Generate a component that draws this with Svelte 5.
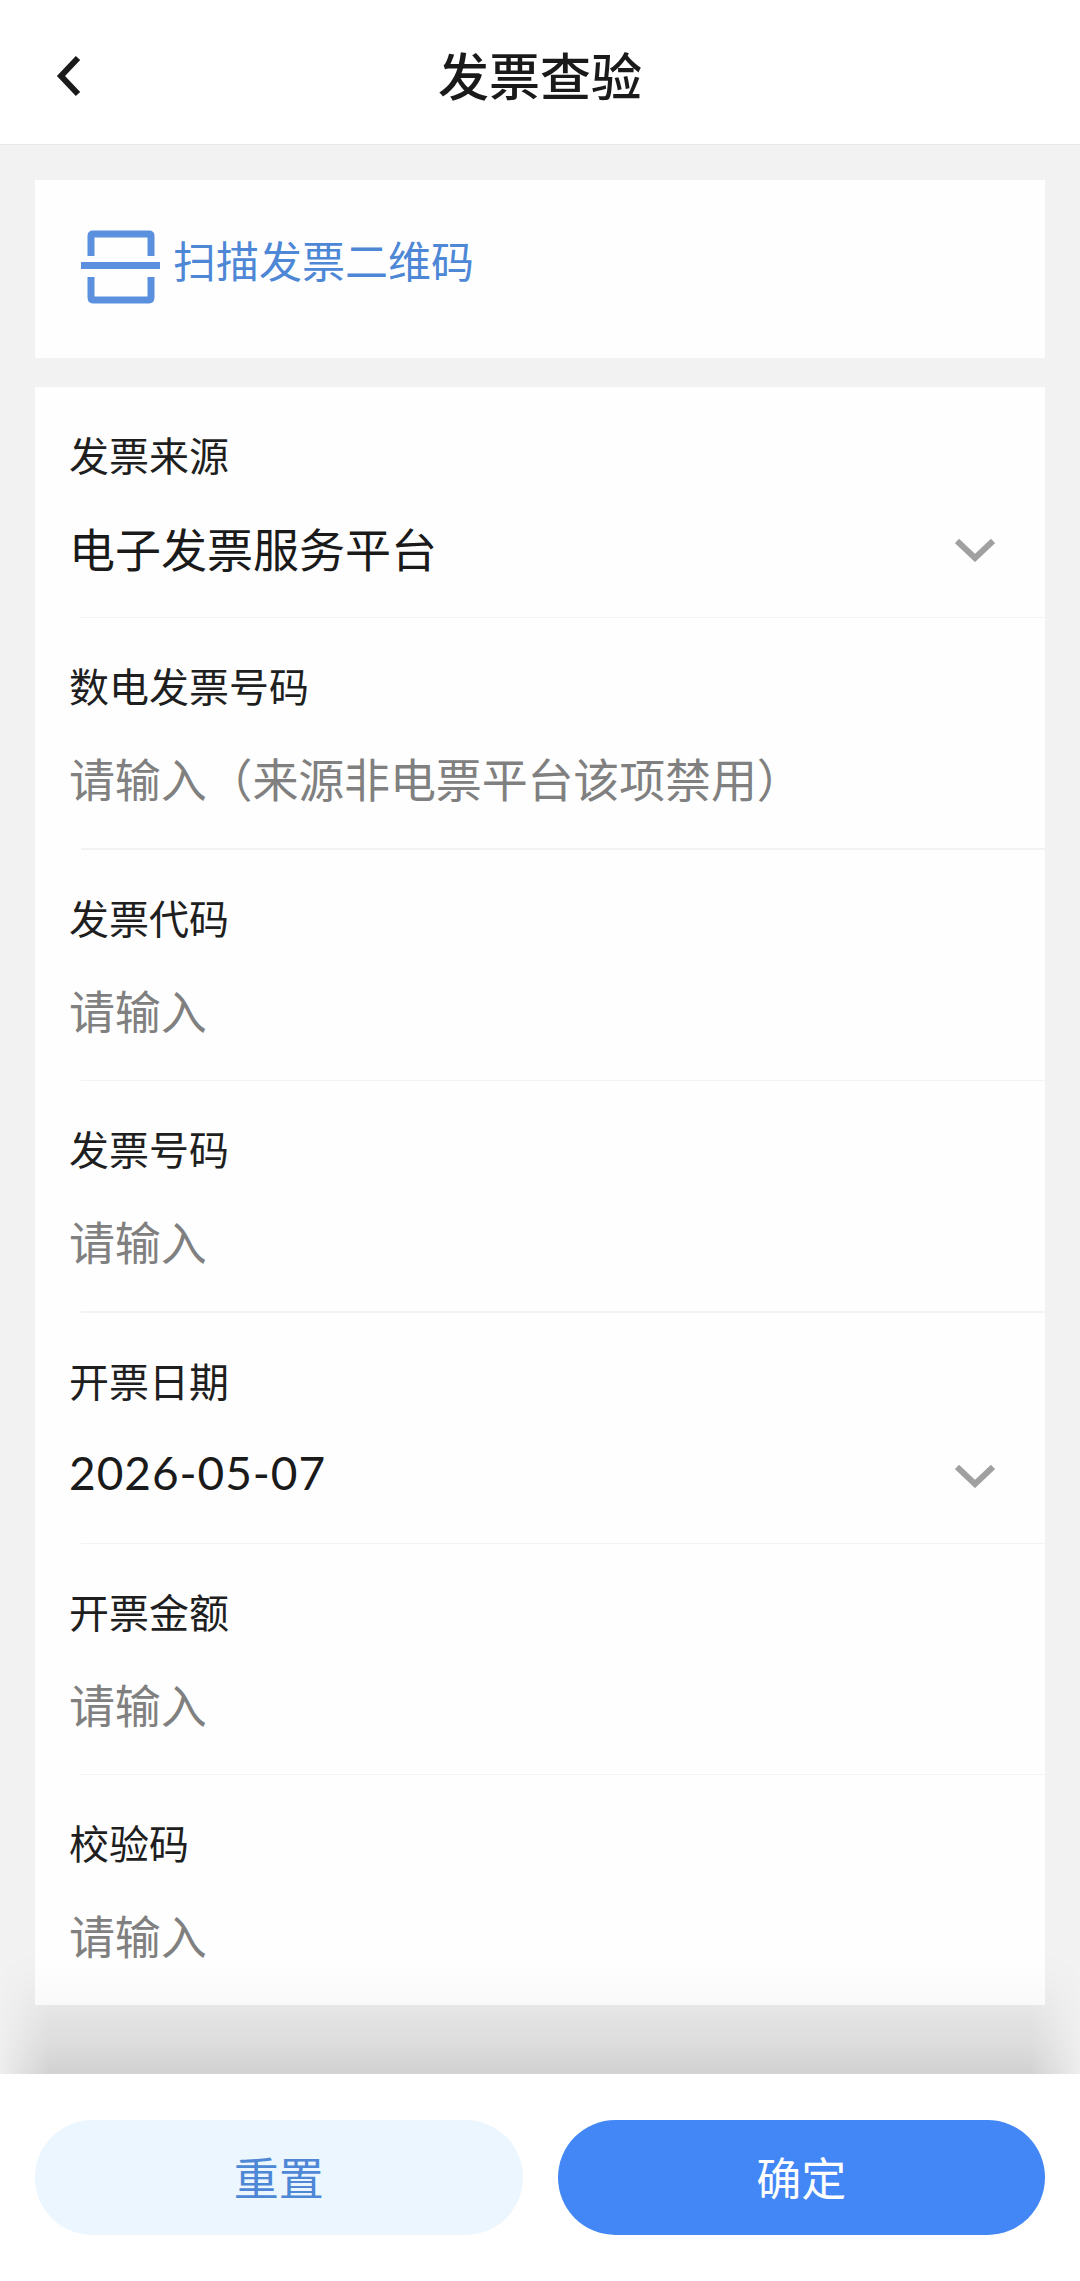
<script>
	const fields = [
		{ label: "发票来源", value: "电子发票服务平台", select: true },
		{ label: "数电发票号码", placeholder: "请输入（来源非电票平台该项禁用）" },
		{ label: "发票代码", placeholder: "请输入" },
		{ label: "发票号码", placeholder: "请输入" },
		{ label: "开票日期", value: "2026-05-07", select: true, date: true },
		{ label: "开票金额", placeholder: "请输入" },
		{ label: "校验码", placeholder: "请输入" }
	];
</script>

<div class="page">
	<header class="nav">
		<svg class="back" width="26" height="42" viewBox="0 0 26 42">
			<path d="M22 3 L5 21 L22 39" fill="none" stroke="#1a1a1a" stroke-width="6" />
		</svg>
		<div class="title">发票查验</div>
	</header>

	<main class="content">
		<section class="scan card">
			<svg width="80" height="74" viewBox="0 0 80 74">
				<path d="M10 26 V6 Q10 4 12 4 H68 Q70 4 70 6 V26" fill="none" stroke="#5b90de" stroke-width="7" />
				<path d="M10 47 V67 Q10 70 12 70 H68 Q70 70 70 67 V47" fill="none" stroke="#5b90de" stroke-width="7" />
				<rect x="0" y="32" width="79" height="7" fill="#5b90de" />
			</svg>
			<span>扫描发票二维码</span>
		</section>

		<section class="form card">
			{#each fields as f}
				<div class="field">
					<div class="label">{f.label}</div>
					<div class="control">
						{#if f.value}
							<span class="value" class:date={f.date}>{f.value}</span>
						{:else}
							<span class="placeholder">{f.placeholder}</span>
						{/if}
						{#if f.select}
							<svg class="arrow" width="40" height="24" viewBox="0 0 40 24">
								<path d="M2 3 L20 20 L38 3" fill="none" stroke="#a0a0a0" stroke-width="6" />
							</svg>
						{/if}
					</div>
				</div>
				<div class="divider"></div>
			{/each}
			<div class="fade"></div>
		</section>
	</main>

	<footer class="actions">
		<button class="btn reset">重置</button>
		<button class="btn confirm">确定</button>
	</footer>
</div>

<style>
	:global(body) {
		margin: 0;
		background: #f2f2f2;
	}
	.page {
		width: 1080px;
		height: 2281px;
		display: flex;
		flex-direction: column;
		font-family: "Noto Sans CJK SC", "Noto Sans", sans-serif;
		background: #f2f2f2;
		overflow: hidden;
	}
	.nav {
		height: 144px;
		flex: none;
		display: flex;
		align-items: center;
		justify-content: center;
		position: relative;
		background: #fff;
		border-bottom: 1px solid #e8e8e8;
	}
	.back {
		position: absolute;
		left: 56px;
		top: 55px;
	}
	.title {
		font-size: 51px;
		font-weight: 500;
		color: #1a1a1a;
		line-height: 60px;
		margin-top: 4px;
	}
	.content {
		flex: 1;
		min-height: 0;
		display: flex;
		flex-direction: column;
		gap: 29px;
		padding: 35px 35px 69px;
		position: relative;
		z-index: 1;
	}
	.card {
		background: #fefefe;
	}
	.scan {
		height: 178px;
		flex: none;
		box-sizing: border-box;
		display: flex;
		align-items: center;
		padding-left: 46px;
		gap: 12px;
		color: #4d87d6;
		font-size: 43px;
	}
	.scan svg {
		margin-top: -5px;
	}
	.scan span {
		margin-top: -20px;
	}
	.form {
		flex: 1;
		min-height: 0;
		overflow: hidden;
		position: relative;
	}
	.field {
		height: 230px;
		box-sizing: border-box;
		padding: 43px 50px 0 34px;
	}
	.label {
		font-size: 40px;
		line-height: 48px;
		color: #1f1f1f;
	}
	.control {
		margin-top: 39px;
		height: 60px;
		display: flex;
		align-items: center;
		justify-content: space-between;
	}
	.value {
		font-size: 46px;
		color: #1a1a1a;
	}
	.value.date {
		font-family: Lato, "Noto Sans", sans-serif;
		letter-spacing: 0.95px;
	}
	.placeholder {
		font-size: 46px;
		letter-spacing: -0.15px;
		color: #808080;
		margin-top: -2px;
	}
	.divider {
		height: 1.4px;
		margin-left: 46px;
		background: #f2f2f2;
	}
	.arrow {
		margin-top: 6px;
	}
	.fade {
		position: absolute;
		left: 0;
		right: 0;
		bottom: 0;
		height: 40px;
		background: linear-gradient(rgba(0, 0, 0, 0), rgba(0, 0, 0, 0.018));
	}
	.actions {
		height: 207px;
		flex: none;
		box-sizing: border-box;
		display: flex;
		gap: 35px;
		padding: 46px 35px 46px;
		background: #fff;
		position: relative;
	}
	.actions::before {
		content: "";
		position: absolute;
		left: 0;
		right: 0;
		bottom: 100%;
		height: 120px;
		background: linear-gradient(
			to top,
			rgba(0, 0, 0, 0.135),
			rgba(0, 0, 0, 0.083) 34px,
			rgba(0, 0, 0, 0.05) 64px,
			rgba(0, 0, 0, 0.012) 100px,
			transparent
		);
		mask-image: linear-gradient(
			to right,
			rgba(0, 0, 0, 0.12),
			#000 50px,
			#000 calc(100% - 50px),
			rgba(0, 0, 0, 0.12)
		);
	}
	.btn {
		flex: 1;
		border: 0;
		height: 115px;
		border-radius: 58px;
		font-family: inherit;
		font-size: 45px;
		padding: 0 0 2px;
	}
	.reset {
		background: #ebf6ff;
		color: #4d87d6;
	}
	.confirm {
		background: #4287f5;
		color: #fff;
	}
</style>
